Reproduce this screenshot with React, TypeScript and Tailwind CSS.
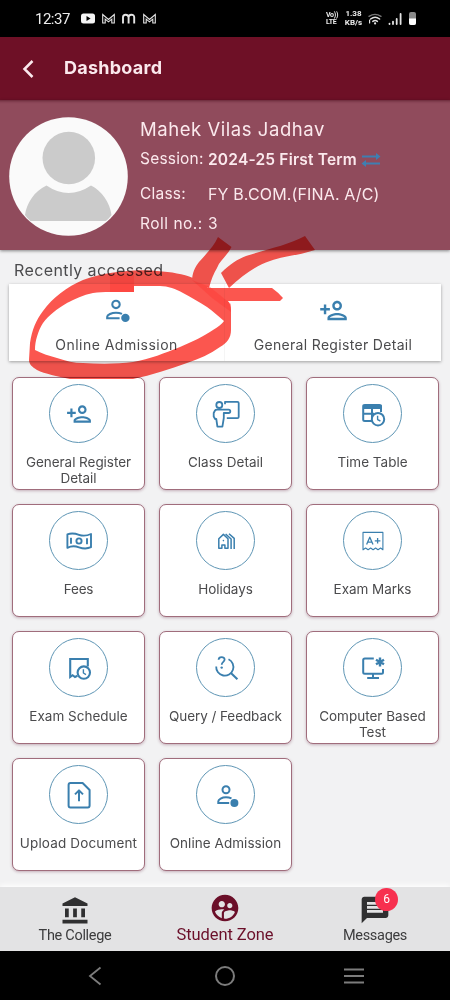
import type { ReactNode } from "react";
import {
  MdAccountBalance,
  MdMessage,
  MdOutlinePersonAdd,
  MdSupervisedUserCircle,
} from "react-icons/md";

/* Line icons share one 32x32 box with the origin in its centre. */
function LineIcon({ children, width = 1.8 }: { children: ReactNode; width?: number }) {
  return (
    <svg
      viewBox="-16 -16 32 32"
      className="size-8 shrink-0"
      fill="none"
      stroke="currentColor"
      strokeWidth={width}
      strokeLinejoin="round"
    >
      {children}
    </svg>
  );
}

function OnlineIcon() {
  return (
    <LineIcon width={2}>
      <circle cx="0" cy="-5.2" r="3.5" />
      <path d="M5.5 3.4C3.8 2.7 2 2.3 0 2.3c-4 0-7.7 2-7.7 4V8H3.2" strokeLinejoin="miter" />
      <circle cx="8.4" cy="8" r="4" fill="currentColor" stroke="none" />
    </LineIcon>
  );
}

function OnlineIconLarge() {
  return (
    <LineIcon width={2.1}>
      <circle cx="-1" cy="-5.6" r="3.7" />
      <path d="M5 3.9C3.200 3.100 1.200 2.700-1 2.700c-4.400 0-8.800 2-8.800 4V8.300H2.600" strokeLinejoin="miter" />
      <circle cx="8.400" cy="7.900" r="4.200" fill="currentColor" stroke="none" />
    </LineIcon>
  );
}

function ClassIcon() {
  return (
    <LineIcon width={1.8}>
      <circle cx="-6.7" cy="-9" r="3" />
      <path d="M-11-3.5Q-10.5-4.4-9-4.4H2.6a1.6 1.6 0 0 1 0 3.4H-2.2V4L-3.6 12.6H-8.6L-9.7 5H-10.9L-12.3 2.5V-1Z" />
      <path d="M-1-9.8V-12.2H11.4Q12.7-12.2 12.7-11V3Q12.7 4.2 11.4 4.2H.8" />
    </LineIcon>
  );
}

function TimeTableIcon() {
  return (
    <LineIcon width={2}>
      <path d="M-1 7H-8.2Q-9.8 7-9.8 5.5V-7.6Q-9.8-9-8.2-9H6.4Q8-9 8-7.6V-2M-9.8-.3H1M-1-5V7" />
      <path d="M-10-9H8.6V-5H-10Z" fill="currentColor" stroke="none" />
      <circle cx="5" cy="5.2" r="6.2" fill="white" />
      <path d="M4.6 1.8V5.6L7.4 7" strokeWidth="1.4" />
    </LineIcon>
  );
}

function FeesIcon() {
  return (
    <LineIcon width={1.9}>
      <path d="M-11.600-6.600C-7.500-8.200-4-7.600 0-6.200S8-5.200 12-7V6.200C8 8 4 7.700 0 6.300S-8 5-11.600 6.800Z" />
      <circle cx="0" cy="0" r="2.600" />
      <path d="M-8-3.200V2.800M8-2.800V3.200" />
    </LineIcon>
  );
}

function HolidaysIcon() {
  return (
    <LineIcon width={1.5}>
      <path d="M-7.2-2.2L-2.6-6.6 2-2.2V7.2H-1.1V4H-4.1V7.2H-7.2Z" />
      <path d="M-.4-7L5.1-2V8M3-7.2L8.2-2.6V8" />
      <circle cx="-2.600" cy="-.4" r=".8" fill="currentColor" stroke="none" />
    </LineIcon>
  );
}

function MarksIcon() {
  return (
    <LineIcon width={1.1}>
      <path d="M-10 8.8V-8.6H9.9V8.8L7.6 7 5 8.8 2.6 7 .1 8.8-2.4 7-4.9 8.8-7.4 7Z" />
      <path d="M-6.4 3.4L-3.2-3.8 0 3.4M-5.4 1.2H-1M1.8-.2H7.4M4.6-3V2.6" strokeWidth="1.3" />
    </LineIcon>
  );
}

function ScheduleIcon() {
  return (
    <LineIcon width={2.1}>
      <path d="M8.8-1.500V-9H-8.800V9L-6.400 7.200-4 9-1.500 7.800" strokeLinejoin="miter" />
      <circle cx="4.8" cy="4.6" r="6.2" fill="white" />
      <path d="M4.4 1.2V5L7 6.600" strokeWidth="1.4" />
    </LineIcon>
  );
}

function QueryIcon() {
  return (
    <LineIcon width={1.8}>
      <path d="M-9.8-1.500A8.600 8.600 0 1 0 2.500-8.700" />
      <path d="M4.900 5.100L11.400 11.200" strokeWidth="2.1" />
      <path d="M-7.400-8.300C-7.200-11.600-1.400-11.700-1.400-8.400-1.400-6-4.300-6.300-4.300-3.200" />
      <circle cx="-4.300" cy="-.4" r="1.200" fill="currentColor" stroke="none" />
    </LineIcon>
  );
}

function ComputerIcon() {
  return (
    <LineIcon width={2}>
      <path d="M.8-9.600H-8.200Q-9.800-9.600-9.800-8V4.200Q-9.800 5.700-8.200 5.700H8.500Q10 5.700 10 4.200V1M0 5.700V9.800M-5.800 10H6" />
      <path d="M7-10.600V-1.400M3-8.300L11-3.700M11-8.300L3-3.700" strokeWidth="2.4" />
    </LineIcon>
  );
}

function UploadIcon() {
  return (
    <LineIcon width={2}>
      <path d="M-8.600-12H3.600L10.600-5V10.400Q10.600 12.400 8.800 12.400H-8.600Q-10.400 12.400-10.400 10.400V-10Q-10.400-12-8.600-12Z" />
      <path d="M0 6.200V-4.200M-4-.6L0-4.600 4-.6" />
    </LineIcon>
  );
}

const services: { label: string; icon: ReactNode; spacing: string }[] = [
  { label: "General Register Detail", icon: <MdOutlinePersonAdd size={26} />, spacing: "tracking-[-0.05px] px-2" },
  { label: "Class Detail", icon: <ClassIcon />, spacing: "tracking-[0.02px]" },
  { label: "Time Table", icon: <TimeTableIcon />, spacing: "tracking-[0px]" },
  { label: "Fees", icon: <FeesIcon />, spacing: "tracking-[-0.2px]" },
  { label: "Holidays", icon: <HolidaysIcon />, spacing: "tracking-[-0.05px]" },
  { label: "Exam Marks", icon: <MarksIcon />, spacing: "tracking-[-0.05px]" },
  { label: "Exam Schedule", icon: <ScheduleIcon />, spacing: "tracking-[0px]" },
  { label: "Query / Feedback", icon: <QueryIcon />, spacing: "tracking-[-0.08px]" },
  { label: "Computer Based Test", icon: <ComputerIcon />, spacing: "tracking-[0px] px-2" },
  { label: "Upload Document", icon: <UploadIcon />, spacing: "tracking-[0.15px]" },
  { label: "Online Admission", icon: <OnlineIcon />, spacing: "tracking-[0.05px]" },
];

function StatusBar() {
  return (
    <div className="flex h-[37px] items-center bg-black pl-[35px] pr-[32px] font-['Roboto',sans-serif] text-[#ececec]">
      <span className="w-[46px] pt-[2px] text-[15px] leading-none tracking-[-0.5px]">12:37</span>
      <svg viewBox="0 0 76 14" className="h-[14px] w-[76px]" fill="none" stroke="#e4e4e4">
        <rect x="0" y="1.500" width="14" height="10" rx="2.500" fill="#f5f5f5" stroke="none" />
        <path d="M5.500 4.100V8.900L9.600 6.500Z" fill="#000" stroke="none" />
        <path d="M21.700 11V2.500L27.500 7.500 33.300 2.500V11H30.800V7.100L27.500 9.900 24.200 7.100V11Z" strokeWidth="1.100" />
        <path d="M42 11.500V5.300Q42 2.700 44.600 2.700T47.600 5.300V11.500M47.600 5.300Q47.600 2.700 50.400 2.700T53.200 5.300V11.500" strokeWidth="1.900" />
        <path d="M62.700 11V2.500L68.500 7.500 74.300 2.500V11H71.800V7.100L68.500 9.900 65.200 7.100V11Z" strokeWidth="1.100" />
      </svg>
      <div className="ml-auto flex items-center">
        <span className="w-[19px] text-[7px] font-bold leading-[7px] tracking-[-0.3px]">
          Vo))<br />LTE
        </span>
        <span className="-ml-[3px] w-[23px] text-center text-[8px] font-bold leading-[8.5px]">
          1.38<br />KB/s
        </span>
        <svg viewBox="0 0 50 14" className="ml-[3px] h-[14px] w-[50px]" fill="none" stroke="#e4e4e4" strokeLinecap="round">
          <path d="M1 4.400Q7 .4 13 4.400" strokeWidth="1.300" stroke="#777" />
          <path d="M2.600 7Q7.200 3.600 11.600 7M4.800 9.400Q7.200 7.600 9.400 9.400" strokeWidth="1.500" />
          <circle cx="7.100" cy="11.400" r="1.100" fill="#e4e4e4" stroke="none" />
          <path d="M1.600 8V11" strokeWidth="1.200" />
          <path d="M21.500 11.600V12M25 9.600V12M28.700 7V12M32.600 2V12" strokeWidth="1.800" />
          <rect x="41" y="0" width="7" height="13" rx="2" fill="#8a8a8a" stroke="none" />
          <path d="M41 6.500H48V11Q48 13 46 13H43Q41 13 41 11Z" fill="#fff" stroke="none" />
        </svg>
      </div>
    </div>
  );
}

function Avatar() {
  return (
    <svg viewBox="0 0 119 119" className="size-[119px] shrink-0">
      <circle cx="59.500" cy="59.500" r="59.300" fill="#fafafa" />
      <circle cx="59.800" cy="41" r="26.300" fill="#cbcbcb" />
      <path d="M37.500 68.500Q59.500 83.500 82 68.500C93 74 101 86 102.500 98Q100.500 101 97 104H21.500Q18 101 16 98C17.500 87 25 74 37.500 68.500Z" fill="#cbcbcb" />
    </svg>
  );
}

function Profile() {
  return (
    <section className="flex h-[150px] bg-[#904b5c] pl-[9px] pt-[17px] text-[#fbe9ed] shadow-[inset_0_4px_3px_-3px_rgba(70,10,25,0.6),0_1px_3px_rgba(0,0,0,0.45)]">
      <Avatar />
      <div className="ml-3 whitespace-nowrap text-[15.5px]">
        <h2 className="h-[28px] text-[18.5px] leading-[25px] tracking-[0.55px]">Mahek Vilas Jadhav</h2>
        <div className="flex h-[33px] items-center pb-1">
          <span className="w-[68px] pb-px tracking-[0.2px]">Session:</span>
          <span className="font-semibold tracking-[0.2px]">2024-25 First Term</span>
          <svg viewBox="0 0 20 16" className="ml-1 h-4 w-5" fill="none" stroke="#3f7fb1" strokeWidth="1.8">
            <path d="M1 4.500H16M4 11.500H19" />
            <path d="M15 1L19.500 4.500 15 8ZM5 8L.5 11.500 5 15Z" fill="#3f7fb1" stroke="none" />
          </svg>
        </div>
        <div className="flex h-8 items-center">
          <span className="w-[68px] tracking-[0.2px]">Class:</span>
          <span className="text-[16px] tracking-[0.15px]">FY B.COM.(FINA. A/C)</span>
        </div>
        <div className="flex h-7 items-center">
          <span className="w-[68px] tracking-[0.5px]">Roll no.:</span>
          <span>3</span>
        </div>
      </div>
    </section>
  );
}

/* Hand-drawn marker that lies over the recent shortcuts. */
function Marker() {
  return (
    <svg
      viewBox="0 0 450 1000"
      className="pointer-events-none absolute left-0 top-0 h-[1000px] w-[450px] mix-blend-multiply"
      fill="#fb564f"
    >
      <path
        fillRule="evenodd"
        d="M30 343C32 330 36 320 43 311C53 297 67 287 83 280C97 275 108 273 122 271.500C137 270 148 270 157 271C172 272 183 274 193 278C201 281 206 286 210 290C217 293 223 296 227 300C230 303 231 306 231 310V330C231 338 227 343 220 347C210 354 199 359 187 363C170 369 152 375 133 379H70C57 376 45 374 37 370C32 367 29 364 29 360ZM35 350C41 353 49 356 57 358C66 361 74 363 83 363C100 364 118 364 133 362C150 359 165 353 180 347C192 342 204 336 213 330C218 327 222 324 224 321C218 316 213 311 207 307C199 302 191 297 183 293C176 289 168 286 160 286H134V292H110C104 292 98 292 93 293C83 295 75 299 67 303C57 309 49 315 43 323C38 331 35 341 35 350Z"
      />
      <path d="M218 237L231.500 247C227 256 220 260 217 268Q212 276 209 288L192 282C192 273 195 267 199 262C207 253 214 246 218 237Z" />
      <path d="M305 236L315 250C296 256 284 256 270 261C255 266 243 275 229 288L221 273C230 264 238 259 246 256C268 249 288 245 305 236Z" />
      <path d="M207 288H272Q279 293 283 298L280 301H224Q215 297 207 288Z" />
      <path d="M110 275H134V292H110Z" fill="#ff3832" opacity="0.45" />
      <path d="M192 280L210 287 231 304V312L212 298Z" fill="#ff3832" opacity="0.4" />
    </svg>
  );
}

function BottomNav() {
  return (
    <nav className="grid h-16 grid-cols-3 bg-[#e3e3e4] font-['Roboto',sans-serif] text-[#3c3c3d] shadow-[0_-2px_5px_rgba(255,255,255,0.9)]">
      <div className="flex flex-col items-center pt-[9px]">
        <MdAccountBalance size={30} className="text-[#303031]" />
        <span className="text-[14.5px] leading-[19px] tracking-[-0.3px]">The College</span>
      </div>
      <div className="flex flex-col items-center pt-[5px] text-[#6b0f29]">
        <MdSupervisedUserCircle size={32} />
        <span className="text-[16.5px] leading-[21px] tracking-[-0.08px]">Student Zone</span>
      </div>
      <div className="flex flex-col items-center pt-[7px]">
        <div className="relative">
          <MdMessage size={32} className="text-[#303031]" />
          <span className="absolute -top-[6.5px] left-4 flex size-[23px] items-center justify-center rounded-full bg-[#f7304f] text-[12px] text-white">
            6
          </span>
        </div>
        <span className="text-[14.5px] leading-5 tracking-[-0.3px]">Messages</span>
      </div>
    </nav>
  );
}

export default function App() {
  return (
    <div className="relative flex h-[1000px] w-[450px] flex-col overflow-hidden bg-[#f2f2f3] font-['Inter',sans-serif] text-[#4b4b4d]">
      <StatusBar />

      <header className="flex h-[63px] items-center bg-[#6e1026] pl-[22px] text-[#fbe9ed]">
        <svg viewBox="0 0 12 18" className="h-[18px] w-3" fill="none" stroke="currentColor" strokeWidth="2.5">
          <path d="M10.500 1L2.500 9l8 8" />
        </svg>
        <h1 className="-mt-[2px] ml-[30px] text-[18px] font-bold tracking-[0.25px]">Dashboard</h1>
      </header>

      <Profile />

      <main className="flex-1">
        <h3 className="h-[34px] pl-[14px] pt-2 text-[16px] leading-6 tracking-[0.4px]">Recently accessed</h3>

        <div className="mx-[9px] grid h-[77px] grid-cols-2 bg-white shadow-[0_1px_3px_rgba(0,0,0,0.35)]">
          <div className="flex flex-col items-center border-r border-[#f5f5f5] pt-[10px] text-[#3a7fae]">
            <OnlineIconLarge />
            <span className="mt-[9px] text-[14px] leading-5 tracking-[0.48px] text-[#4b4b4d]">Online Admission</span>
          </div>
          <div className="flex flex-col items-center pt-3 text-[#3a7fae]">
            <MdOutlinePersonAdd size={29} />
            <span className="mt-[10px] text-[14px] leading-5 tracking-[0.32px] text-[#4b4b4d]">General Register Detail</span>
          </div>
        </div>

        <div className="mt-4 grid grid-cols-[133px_133px_133px] gap-[14px] pl-3">
          {services.map((item) => (
            <div
              key={item.label}
              className="flex h-[113px] flex-col items-center rounded-[7px] border border-[#a06d7c] bg-white pt-[6px] shadow-[0_1px_3px_rgba(90,20,50,0.3)]"
            >
              <div className="flex size-[59px] shrink-0 items-center justify-center rounded-full border border-[#5f96b5] text-[#3a7fae]">
                {item.icon}
              </div>
              <span className={`mt-3 text-center text-[13.5px] leading-[15.5px] ${item.spacing}`}>{item.label}</span>
            </div>
          ))}
        </div>
      </main>

      <BottomNav />

      <div className="flex h-[49px] items-center justify-between bg-black pl-[88px] pr-[86px] text-[#7c7c7c]">
        <svg viewBox="0 0 14 20" className="h-5 w-[14px]" fill="none" stroke="currentColor" strokeWidth="1.8">
          <path d="M12.500 1.500L2 10l10.500 8.500" />
        </svg>
        <div className="ml-[4px] size-5 rounded-full border-2 border-current" />
        <svg viewBox="0 0 20 18" className="h-[18px] w-5" stroke="currentColor" strokeWidth="2">
          <path d="M0 2.500H20M0 9H20M0 15.500H20" />
        </svg>
      </div>

      <Marker />
    </div>
  );
}
